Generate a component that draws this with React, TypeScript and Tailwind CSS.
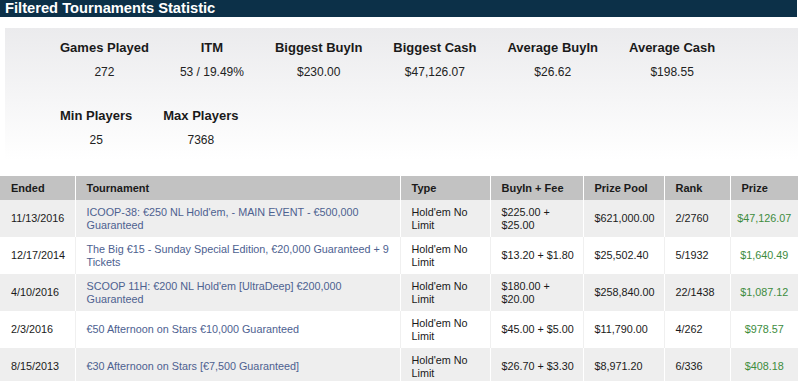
import React from "react";

const stats1 = [
  ["Games Played", "272"],
  ["ITM", "53 / 19.49%"],
  ["Biggest BuyIn", "$230.00"],
  ["Biggest Cash", "$47,126.07"],
  ["Average BuyIn", "$26.62"],
  ["Average Cash", "$198.55"],
];
const stats2 = [
  ["Min Players", "25"],
  ["Max Players", "7368"],
];

const rows = [
  ["11/13/2016", "ICOOP-38: €250 NL Hold'em, - MAIN EVENT - €500,000 Guaranteed", "Hold'em No Limit", "$225.00 + $25.00", "$621,000.00", "2/2760", "$47,126.07"],
  ["12/17/2014", "The Big €15 - Sunday Special Edition, €20,000 Guaranteed + 9 Tickets", "Hold'em No Limit", "$13.20 + $1.80", "$25,502.40", "5/1932", "$1,640.49"],
  ["4/10/2016", "SCOOP 11H: €200 NL Hold'em [UltraDeep] €200,000 Guaranteed", "Hold'em No Limit", "$180.00 + $20.00", "$258,840.00", "22/1438", "$1,087.12"],
  ["2/3/2016", "€50 Afternoon on Stars €10,000 Guaranteed", "Hold'em No Limit", "$45.00 + $5.00", "$11,790.00", "4/262", "$978.57"],
  ["8/15/2013", "€30 Afternoon on Stars [€7,500 Guaranteed]", "Hold'em No Limit", "$26.70 + $3.30", "$8,971.20", "6/336", "$408.18"],
];

const headers = ["Ended", "Tournament", "Type", "BuyIn + Fee", "Prize Pool", "Rank", "Prize"];
const widths = [75, 325, 90, 93, 81, 66, 68];

function Stat({ label, value }: { label: string; value: string }) {
  return (
    <div className="flex flex-col items-center px-[15.5px]">
      <div className="text-[13px] font-bold leading-4 text-[#1a1a1a]">{label}</div>
      <div className="mt-2 text-[12px] leading-4 text-[#222]">{value}</div>
    </div>
  );
}

export default function App() {
  return (
    <div
      className="w-[798px] h-[381px] overflow-hidden bg-white"
      style={{ fontFamily: '"Liberation Sans", Arial, sans-serif' }}
    >
      <div className="h-[17px] w-[797px] bg-[#0c3048] pl-[5px] text-[14.7px] font-bold leading-[17px] text-white">
        Filtered Tournaments Statistic
      </div>
      <div className="ml-[5px] mt-[11px] h-[132px] bg-gradient-to-b from-[#ebebed] to-white pl-[39.5px] pt-[12px]">
        <div className="flex">
          {stats1.map(([l, v]) => (
            <Stat key={l} label={l} value={v} />
          ))}
        </div>
        <div className="mt-[28px] flex">
          {stats2.map(([l, v]) => (
            <Stat key={l} label={l} value={v} />
          ))}
        </div>
      </div>
      <table className="mt-[16px] w-[798px] table-fixed border-collapse text-[10.8px]">
        <colgroup>
          {widths.map((w, i) => (
            <col key={i} style={{ width: w }} />
          ))}
        </colgroup>
        <thead>
          <tr className="h-[24px] bg-[#c2c2c2]">
            {headers.map((h, i) => (
              <th
                key={h}
                className={`pl-[11px] text-left text-[11px] font-bold text-[#1a1a1a] ${i < headers.length - 1 ? "border-r border-white" : ""}`}
              >
                {h}
              </th>
            ))}
          </tr>
        </thead>
        <tbody>
          {rows.map((r, ri) => {
            const gray = ri % 2 === 0;
            return (
              <tr key={ri} className={`h-[37px] ${gray ? "bg-[#eeeeee]" : "bg-white"}`}>
                {r.map((c, ci) => (
                  <td
                    key={ci}
                    className={`py-[5px] align-middle leading-[13px] ${
                      ci === 6 ? "px-0 text-center" : "pl-[11px] pr-[2px] text-left"
                    } ${
                      ci < r.length - 1 ? (gray ? "border-r border-white" : "border-r border-[#f0f0f0]") : ""
                    } ${ci === 1 ? "text-[#4d6190]" : ci === 6 ? "text-[#3d8c3d]" : "text-[#1a1a1a]"}`}
                  >
                    {c}
                  </td>
                ))}
              </tr>
            );
          })}
        </tbody>
      </table>
    </div>
  );
}
